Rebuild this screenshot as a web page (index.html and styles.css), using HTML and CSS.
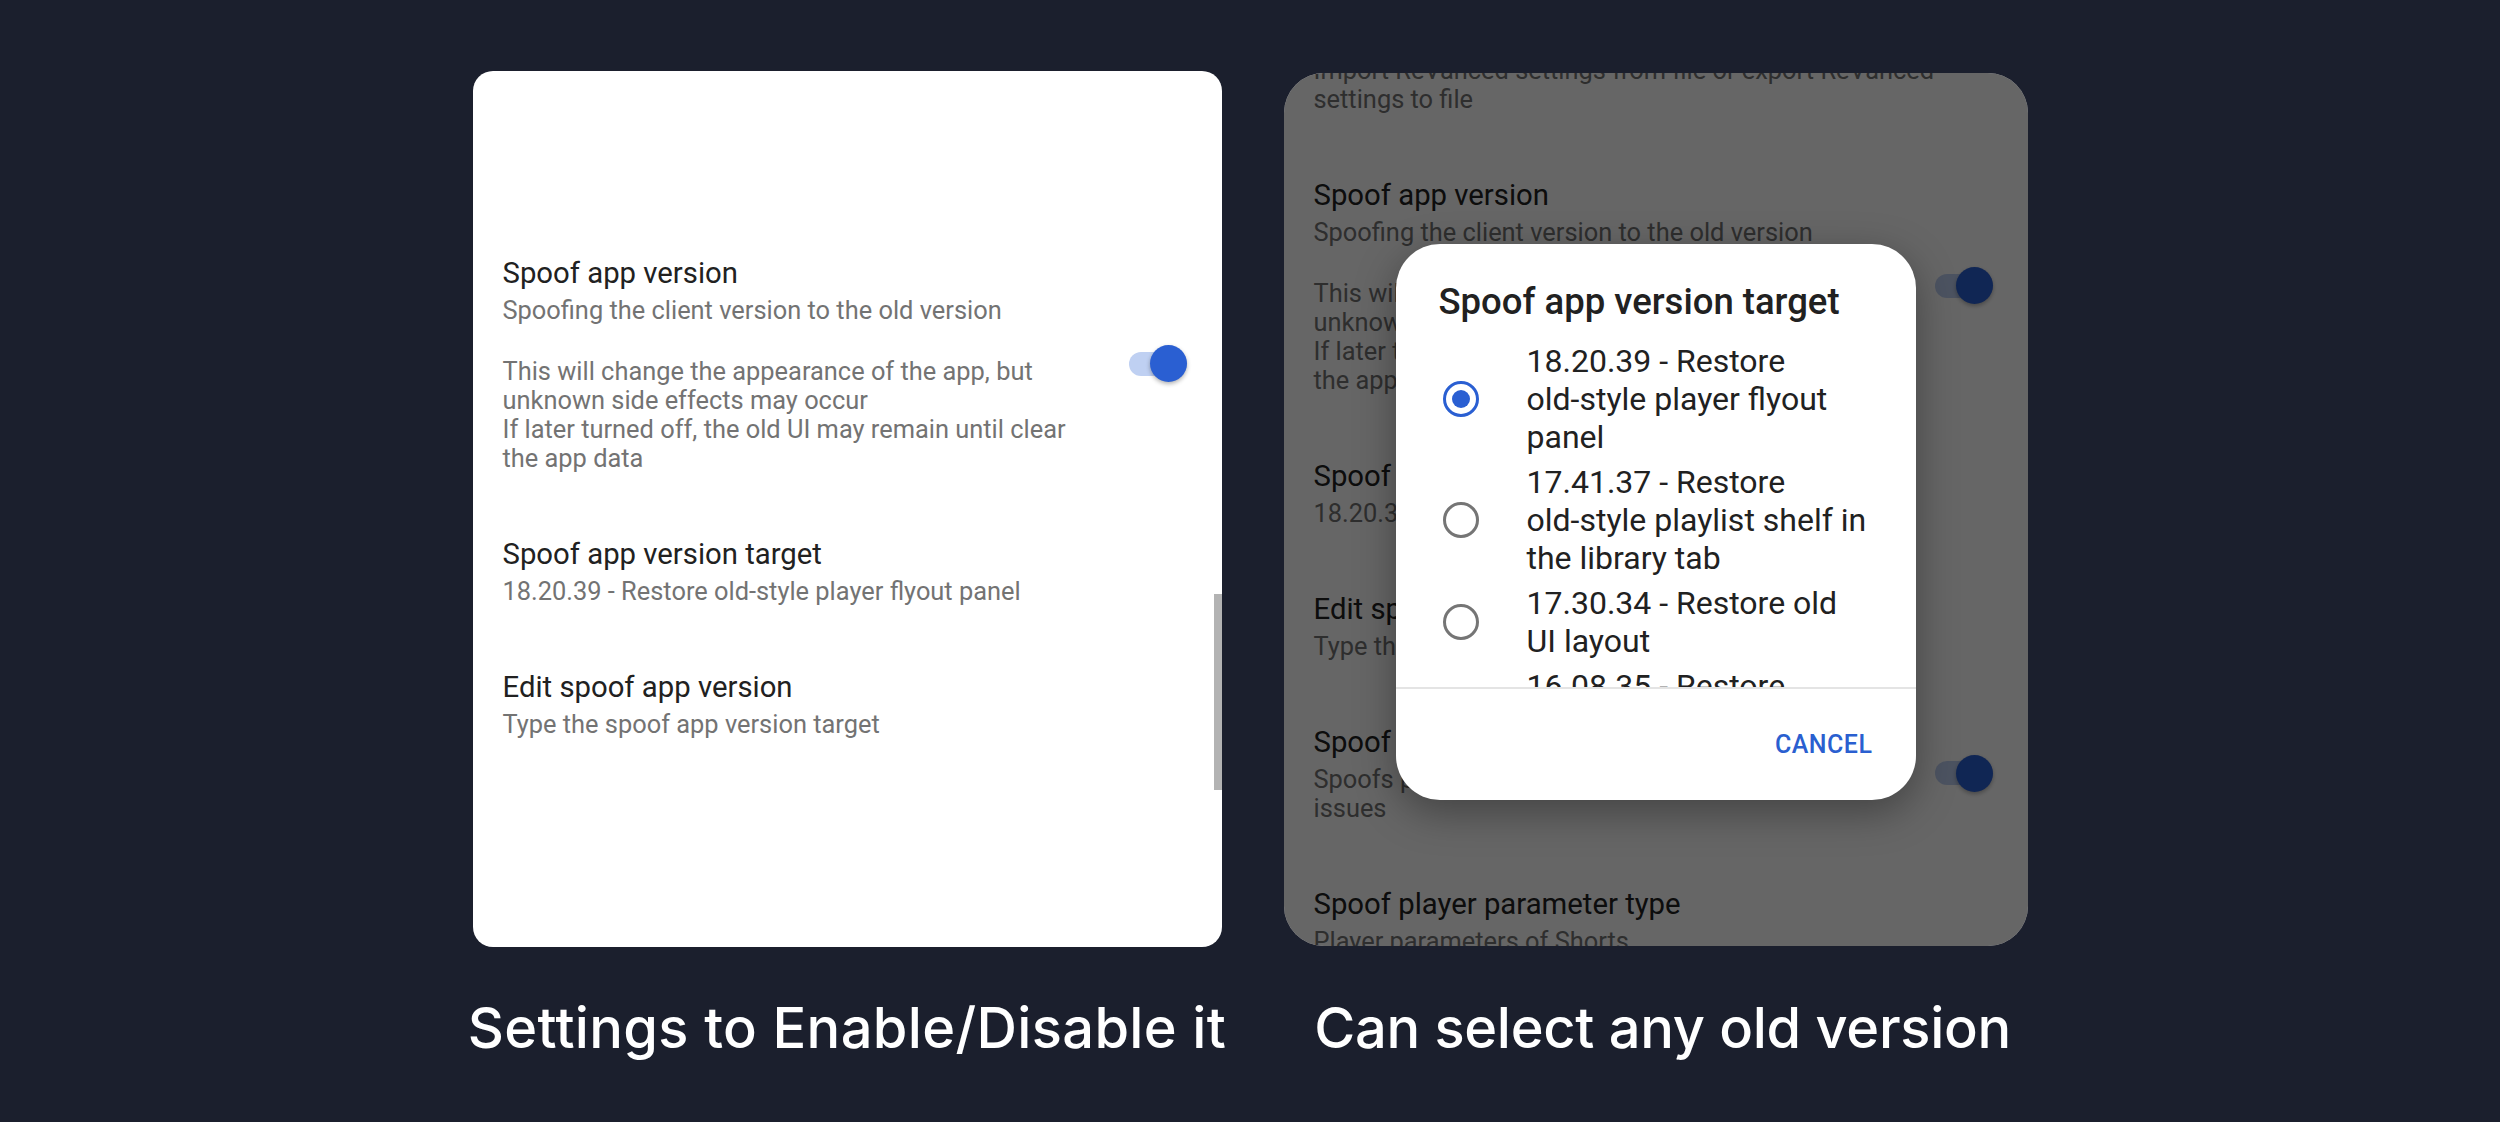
FILE: index.html
```html
<!DOCTYPE html>
<html lang="en">
<head>
<meta charset="utf-8">
<title>Spoof app version</title>
<link rel="stylesheet" href="styles.css">
</head>
<body>
<main class="showcase">
  <section class="panel panel-left">
    <div class="phone phone-light">
      <div class="pref-list list-a">
        <div class="pref">
          <div class="pref-text">
            <p class="pref-title">Spoof app version</p>
            <p class="pref-summary">Spoofing the client version to the old version</p>
            <p class="pref-summary pref-note">This will change the appearance of the app, but unknown side effects may occur<br>If later turned off, the old UI may remain until clear the app data</p>
          </div>
          <span class="switch"><span class="thumb"></span></span>
        </div>
        <div class="pref">
          <div class="pref-text">
            <p class="pref-title">Spoof app version target</p>
            <p class="pref-summary">18.20.39 - Restore old-style player flyout panel</p>
          </div>
        </div>
        <div class="pref">
          <div class="pref-text">
            <p class="pref-title">Edit spoof app version</p>
            <p class="pref-summary">Type the spoof app version target</p>
          </div>
        </div>
      </div>
      <div class="scrollbar"></div>
    </div>
    <p class="caption caption-left">Settings to Enable/Disable it</p>
  </section>

  <section class="panel panel-right">
    <div class="phone phone-dim">
      <div class="pref-list list-b">
        <div class="pref">
          <div class="pref-text">
            <p class="pref-title">Import / Export</p>
            <p class="pref-summary">Import ReVanced settings from file or export ReVanced settings to file</p>
          </div>
        </div>
        <div class="pref">
          <div class="pref-text">
            <p class="pref-title">Spoof app version</p>
            <p class="pref-summary">Spoofing the client version to the old version</p>
            <p class="pref-summary pref-note">This will change the appearance of the app, but unknown side effects may occur<br>If later turned off, the old UI may remain until clear the app data</p>
          </div>
          <span class="switch"><span class="thumb"></span></span>
        </div>
        <div class="pref">
          <div class="pref-text">
            <p class="pref-title">Spoof app version target</p>
            <p class="pref-summary">18.20.39 - Restore old-style player flyout panel</p>
          </div>
        </div>
        <div class="pref">
          <div class="pref-text">
            <p class="pref-title">Edit spoof app version</p>
            <p class="pref-summary">Type the spoof app version target</p>
          </div>
        </div>
        <div class="pref">
          <div class="pref-text">
            <p class="pref-title">Spoof player parameter</p>
            <p class="pref-summary">Spoofs player parameters to prevent playback issues</p>
          </div>
          <span class="switch"><span class="thumb"></span></span>
        </div>
        <div class="pref">
          <div class="pref-text">
            <p class="pref-title">Spoof player parameter type</p>
            <p class="pref-summary">Player parameters of Shorts</p>
          </div>
        </div>
      </div>
      <div class="scrim">
        <div class="dialog">
          <p class="dialog-title">Spoof app version target</p>
          <div class="options">
            <div class="option">
              <span class="radio on"></span>
              <span class="option-text">18.20.39 - Restore <span class="nobr">old-style</span> player flyout panel</span>
            </div>
            <div class="option">
              <span class="radio"></span>
              <span class="option-text">17.41.37 - Restore <span class="nobr">old-style</span> playlist shelf in the library tab</span>
            </div>
            <div class="option">
              <span class="radio"></span>
              <span class="option-text">17.30.34 - Restore old UI layout</span>
            </div>
            <div class="option">
              <span class="radio"></span>
              <span class="option-text">16.08.35 - Restore <span class="nobr">old-style</span> action buttons</span>
            </div>
          </div>
          <div class="actions">
            <span class="cancel">CANCEL</span>
          </div>
        </div>
      </div>
    </div>
    <p class="caption caption-right">Can select any old version</p>
  </section>
</main>
</body>
</html>
```

FILE: styles.css
```css
* {
  box-sizing: border-box;
}

body {
  margin: 0;
  background: #1b1f2d;
  font-family: Roboto, "Noto Sans", sans-serif;
}

.showcase {
  display: flex;
  justify-content: center;
  gap: 62px;
  padding-top: 71px;
}

.panel {
  flex: none;
  display: flex;
  flex-direction: column;
  align-items: center;
}

.panel-left {
  width: 749px;
}

.panel-right {
  width: 744px;
}

.phone {
  position: relative;
  overflow: hidden;
  background: #ffffff;
}

.phone-light {
  width: 749px;
  height: 876px;
  border-radius: 20px;
}

.phone-dim {
  width: 744px;
  height: 873px;
  margin-top: 2px;
  border-radius: 40px;
}

.pref-list {
  display: flex;
  flex-direction: column;
}

.list-a {
  padding-top: 152px;
}

.list-b {
  margin-top: -90px;
}

.pref {
  display: flex;
  align-items: center;
  padding: 31px 35px 31px 30px;
}

.pref-text {
  flex: 1;
  min-width: 0;
}

.pref-title {
  margin: 0;
  font-size: 29.3px;
  line-height: 38px;
  color: #212121;
}

.pref-summary {
  margin: 4px 0 0;
  font-size: 25.4px;
  line-height: 29px;
  color: #737373;
}

.pref-note {
  margin-top: 32px;
}

.switch {
  flex: none;
  margin-left: 46px;
  width: 58px;
  height: 24px;
  border-radius: 12px;
  background: #bfd0f2;
  display: flex;
  align-items: center;
  justify-content: flex-end;
}

.thumb {
  flex: none;
  width: 37px;
  height: 37px;
  border-radius: 50%;
  background: #2a5fd2;
  box-shadow: 0 2px 4px rgba(0, 0, 0, 0.3);
}

.scrollbar {
  position: absolute;
  right: 0;
  top: 523px;
  width: 8px;
  height: 196px;
  background: #b3b3b3;
}

.scrim {
  position: absolute;
  inset: 0;
  background: rgba(0, 0, 0, 0.6);
  display: flex;
  justify-content: center;
  align-items: flex-start;
  padding-top: 171px;
}

.dialog {
  width: 520px;
  height: 556px;
  background: #ffffff;
  border-radius: 44px;
  display: flex;
  flex-direction: column;
  overflow: hidden;
  box-shadow: 0 12px 40px rgba(0, 0, 0, 0.35);
}

.dialog-title {
  margin: 0;
  padding: 37px 30px 0 43px;
  font-size: 36.5px;
  font-weight: 500;
  line-height: 42px;
  color: #212121;
}

.options {
  flex: none;
  height: 349px;
  margin-top: 15px;
  overflow: hidden;
}

.option {
  display: flex;
  align-items: center;
  padding: 4px 45px 3px 47px;
}

.radio {
  flex: none;
  width: 36px;
  height: 36px;
  margin-right: 48px;
  border-radius: 50%;
  border: 3.5px solid #757575;
  display: flex;
  align-items: center;
  justify-content: center;
}

.radio.on {
  border-color: #2a5fd2;
}

.radio.on::after {
  content: "";
  width: 18px;
  height: 18px;
  border-radius: 50%;
  background: #2a5fd2;
}

.option-text {
  flex: 1;
  min-width: 0;
  font-size: 32px;
  line-height: 38px;
  color: #212121;
}

.nobr {
  white-space: nowrap;
}

.actions {
  flex: 1;
  display: flex;
  align-items: center;
  justify-content: flex-end;
  padding-right: 43px;
  border-top: 2px solid #e4e4e4;
}

.cancel {
  font-size: 25px;
  font-weight: 500;
  letter-spacing: 0.5px;
  color: #2a5fd0;
}

.caption {
  flex: none;
  margin: 47px 0 0;
  font-family: Inter, "Noto Sans", sans-serif;
  font-weight: 500;
  font-size: 56px;
  line-height: 68px;
  color: #ffffff;
  white-space: nowrap;
}

.caption-left {
  letter-spacing: 0.35px;
}

.caption-right {
  margin-top: 48px;
  padding-left: 14px;
  letter-spacing: -0.3px;
}
```
